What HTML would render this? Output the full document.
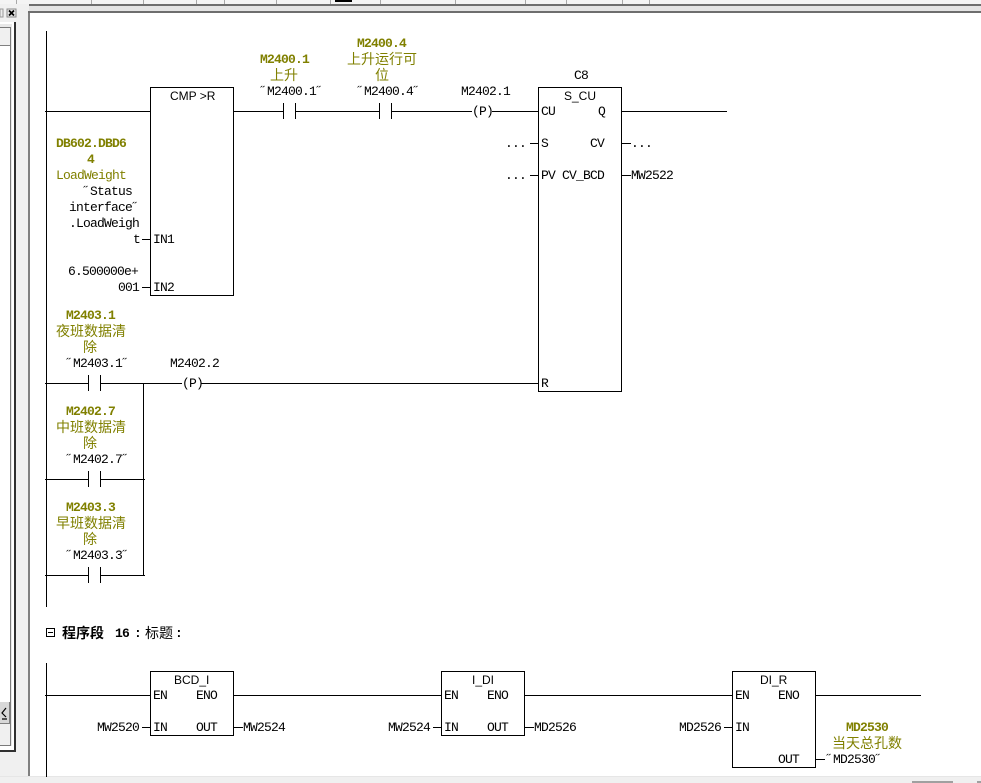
<!DOCTYPE html>
<html><head><meta charset="utf-8">
<style>
html,body{margin:0;padding:0;width:981px;height:783px;overflow:hidden;background:#f0f0f0}
svg{display:block;position:absolute;left:0;top:0}
text{font-family:"Liberation Mono","Noto Sans CJK SC",monospace;font-size:13px;letter-spacing:-0.8px;fill:#000;white-space:pre}
.b{font-weight:bold;fill:#808000}
.o{fill:#808000}
.c{font-family:"Noto Sans CJK SC","WenQuanYi Zen Hei",sans-serif;font-size:14px;letter-spacing:0;fill:#808000}
.a{font-family:"Liberation Sans",sans-serif;font-size:12px;letter-spacing:0;fill:#000}
.w{stroke:#000;stroke-width:1;fill:none;shape-rendering:crispEdges}
.h{font-family:"Noto Sans CJK SC","WenQuanYi Zen Hei",sans-serif;font-size:14px;letter-spacing:0;fill:#000}
</style></head>
<body>
<svg width="981" height="783" viewBox="0 0 981 783" xmlns="http://www.w3.org/2000/svg">
<!-- chrome -->
<rect width="981" height="783" fill="#f0f0f0"/>
<rect x="0" y="0" width="981" height="4" fill="#f4f4f4"/>
<g stroke="#a8a8a8" stroke-width="1" shape-rendering="crispEdges">
<path d="M16.5 0V4M91.5 0V4M143.5 0V4M196.5 0V4M224.5 0V4M276.5 0V4M330.5 0V4M380.5 0V4M455.5 0V4M525.5 0V4M566.5 0V4M622.5 0V4M649.5 0V4"/>
</g>
<rect x="335" y="0" width="17" height="2" fill="#000"/>
<rect x="29" y="4" width="952" height="2" fill="#6e6e6e"/>
<rect x="29" y="6" width="952" height="5" fill="#e4e4e4"/>
<rect x="28" y="11" width="953" height="2" fill="#6e6e6e"/>
<rect x="28" y="13" width="2" height="764" fill="#808080"/>
<rect x="30" y="13" width="951" height="764" fill="#fff"/>
<rect x="0" y="777" width="981" height="6" fill="#f0f0f0"/>
<rect x="0" y="776" width="981" height="1" fill="#e6e6e6"/>
<rect x="912" y="781" width="41" height="2" fill="#a0a0a0"/>
<rect x="977" y="781" width="4" height="2" fill="#a0a0a0"/>
<!-- left panel -->
<rect x="0" y="22" width="16" height="730" fill="#000" opacity=".8"/>
<rect x="0" y="22" width="14" height="728" fill="#fff"/>
<rect x="0" y="24" width="12" height="722" fill="#e8e8e8"/>
<rect x="0" y="27" width="11" height="719" fill="#7a7a7a"/>
<rect x="0" y="28" width="10" height="717" fill="#fff"/>
<rect x="0" y="28" width="10" height="17" fill="#f0f0f0"/>
<rect x="0" y="45" width="10" height="1" fill="#808080"/>
<rect x="0" y="702" width="9" height="22" fill="#d8d8d8"/>
<rect x="0" y="723" width="10" height="1" fill="#808080"/>
<rect x="0" y="724" width="10" height="21" fill="#f0f0f0"/>
<rect x="9" y="702" width="1" height="22" fill="#808080"/>
<path d="M6 708L2 713L6 717M2 719H7" stroke="#000" stroke-width="1.2" fill="none"/>
<rect x="0" y="9" width="3" height="8" fill="#ececec" stroke="#999" stroke-width="1"/>
<rect x="7" y="9" width="9" height="8" fill="#e8e8e8" stroke="#888" stroke-width="1" shape-rendering="crispEdges"/>
<path d="M9 10.5L14 15.5M14 10.5L9 15.5" stroke="#000" stroke-width="1.8"/>

<!-- network 15 -->
<g class="w">
<path d="M46.5 31V607"/>
<path d="M45 111.5H150M233 111.5H283M295 111.5H379M392 111.5H472M492 111.5H538"/>
<path d="M283.5 103V119M295.5 103V119M379.5 103V119M391.5 103V119"/>
<rect x="150.5" y="87.5" width="83" height="208" fill="#fff"/>
<path d="M142 239.5H150M142 287.5H150"/>
<rect x="538.5" y="87.5" width="83" height="304" fill="#fff"/>
<path d="M621 111.5H727M530 143.5H538M530 175.5H538M621 143.5H631M621 175.5H631"/>
<path d="M45 383.5H88M100 383.5H182M201 383.5H538"/>
<path d="M88.5 375V391M100.5 375V391"/>
<path d="M143.5 383V575"/>
<path d="M45 479.5H88M100 479.5H145"/>
<path d="M88.5 471V487M100.5 471V487"/>
<path d="M45 575.5H88M100 575.5H145"/>
<path d="M88.5 567V583M100.5 567V583"/>
</g>
<text x="472" y="115">(P)</text>
<text x="182" y="387">(P)</text>

<text class="a" x="170" y="100">CMP &gt;R</text>
<text class="b" x="260" y="63">M2400.1</text>
<text class="c" x="270" y="80">上升</text>
<text x="260" y="95">˝M2400.1˝</text>
<text class="b" x="357" y="47">M2400.4</text>
<text class="c" x="347" y="64">上升运行可</text>
<text class="c" x="375" y="80">位</text>
<text x="357" y="95">˝M2400.4˝</text>
<text x="461" y="95">M2402.1</text>
<text x="574" y="79">C8</text>
<text class="a" x="564" y="100">S_CU</text>
<text x="541" y="115">CU</text>
<text x="598" y="115">Q</text>
<text x="541" y="147">S</text>
<text x="590" y="147">CV</text>
<text x="541" y="179">PV</text>
<text x="562" y="179">CV_BCD</text>
<text x="541" y="387">R</text>
<text x="505" y="147">...</text>
<text x="505" y="179">...</text>
<text x="631" y="147">...</text>
<text x="631" y="179">MW2522</text>

<text class="b" x="56" y="147">DB602.DBD6</text>
<text class="b" x="87" y="163">4</text>
<text class="o" x="56" y="179">LoadWeight</text>
<text x="83" y="195">˝Status</text>
<text x="69" y="211">interface˝</text>
<text x="69" y="227">.LoadWeigh</text>
<text x="133" y="243">t</text>
<text x="153" y="243">IN1</text>
<text x="68" y="275">6.500000e+</text>
<text x="118" y="291">001</text>
<text x="153" y="291">IN2</text>

<text class="b" x="66" y="319">M2403.1</text>
<text class="c" x="56" y="336">夜班数据清</text>
<text class="c" x="83" y="352">除</text>
<text x="66" y="367">˝M2403.1˝</text>
<text x="170" y="367">M2402.2</text>
<text class="b" x="66" y="415">M2402.7</text>
<text class="c" x="56" y="432">中班数据清</text>
<text class="c" x="83" y="448">除</text>
<text x="66" y="463">˝M2402.7˝</text>
<text class="b" x="66" y="511">M2403.3</text>
<text class="c" x="56" y="528">早班数据清</text>
<text class="c" x="83" y="544">除</text>
<text x="66" y="559">˝M2403.3˝</text>

<!-- header -->
<rect x="46.5" y="628.5" width="8" height="8" fill="none" stroke="#000" shape-rendering="crispEdges"/>
<path d="M48 632.5H53" stroke="#000" shape-rendering="crispEdges"/>
<text class="h" x="62" y="638" style="font-weight:bold">程序段</text>
<text x="115" y="637" style="font-weight:bold">16</text>
<text x="134" y="637" style="font-weight:bold">:</text>
<text class="h" x="145" y="638">标题</text>
<text x="175" y="637" style="font-weight:bold">:</text>

<!-- network 16 -->
<g class="w">
<path d="M46.5 663V777"/>
<path d="M45 695.5H921"/>
<rect x="150.5" y="671.5" width="83" height="64" fill="#fff"/>
<path d="M142 727.5H150M233 727.5H243"/>
<rect x="441.5" y="671.5" width="83" height="64" fill="#fff"/>
<path d="M433 727.5H441M524 727.5H534"/>
<rect x="732.5" y="671.5" width="83" height="96" fill="#fff"/>
<path d="M724 727.5H732M815 759.5H825"/>
</g>
<text class="a" x="174" y="684">BCD_I</text>
<text x="153" y="699">EN</text><text x="196" y="699">ENO</text>
<text x="153" y="731">IN</text><text x="196" y="731">OUT</text>
<text x="97" y="731">MW2520</text>
<text x="243" y="731">MW2524</text>

<text class="a" x="472" y="684">I_DI</text>
<text x="444" y="699">EN</text><text x="487" y="699">ENO</text>
<text x="444" y="731">IN</text><text x="487" y="731">OUT</text>
<text x="388" y="731">MW2524</text>
<text x="534" y="731">MD2526</text>

<text class="a" x="760" y="684">DI_R</text>
<text x="735" y="699">EN</text><text x="778" y="699">ENO</text>
<text x="735" y="731">IN</text><text x="778" y="763">OUT</text>
<text x="679" y="731">MD2526</text>
<text class="b" x="846" y="731">MD2530</text>
<text class="c" x="832" y="748">当天总孔数</text>
<text x="826" y="763">˝MD2530˝</text>
</svg>
</body></html>
